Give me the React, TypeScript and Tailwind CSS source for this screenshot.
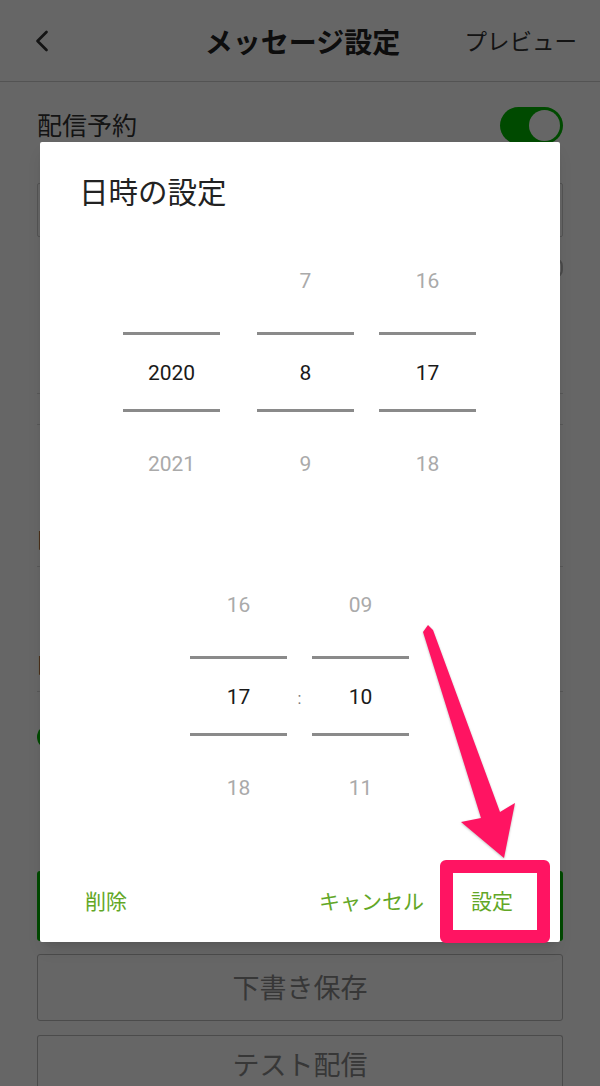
import { ChevronLeft } from "lucide-react";

const jp = { fontFamily: '"Noto Sans CJK JP", "Noto Sans", sans-serif' };
const num = { fontFamily: 'Roboto, "Noto Sans", sans-serif' };

interface WheelProps {
    prev: string;
    value: string;
    next: string;
}

function Wheel({ prev, value, next }: WheelProps) {
    return (
        <div className="flex flex-col items-center w-[97px]" style={num}>
            <div className="h-[40px] leading-[40px] text-[21px] text-[#aaaaaa]">{prev}</div>
            <div className="mt-[31px] w-full h-[80px] border-y-[3px] border-[#8a8a8a] flex items-center justify-center pt-[4px] text-[21px] text-[#1a1a1a]">
                {value}
            </div>
            <div className="mt-[32px] h-[40px] leading-[40px] text-[21px] text-[#aaaaaa]">{next}</div>
        </div>
    );
}

function BackgroundPage() {
    return (
        <div className="flex flex-col text-[#333]" style={jp}>
            {/* Header */}
            <div className="h-[82px] border-b border-[#cfcfcf] grid grid-cols-[1fr_auto_1fr] items-center pl-[24px] pr-[23px]">
                <ChevronLeft className="w-[36px] h-[36px] text-[#333]" strokeWidth={1.8} />
                <div className="text-[28px] font-bold text-[#222] translate-x-[2px]">メッセージ設定</div>
                <div className="justify-self-end text-[22.5px] text-[#333]">プレビュー</div>
            </div>

            {/* 配信予約 */}
            <div className="h-[86px] flex items-center justify-between px-[37px]">
                <span className="text-[25px]">配信予約</span>
                <div className="w-[63px] h-[37px] rounded-full bg-[#00b900] flex items-center justify-end pr-[3px]">
                    <div className="w-[31px] h-[31px] rounded-full bg-white" />
                </div>
            </div>

            <div className="mx-[37px] mt-[15px] h-[54px] border border-[#cfcfcf] rounded-[2px]" />

            <div className="mx-[37px] mt-[21px] h-[20px] flex justify-end">
                <div className="w-[16px] h-[20px] rounded-full border-2 border-[#bbb]" />
            </div>

            <div className="mx-[37px] mt-[115px] border-b border-[#ddd]" />
            <div className="mx-[37px] mt-[30px] border-b border-[#ddd]" />

            <div className="mx-[37px] mt-[95px] text-[24px] leading-[34px]">内容</div>
            <div className="mx-[37px] mt-[12px] border-b border-[#ddd]" />

            <div className="mx-[37px] mt-[78px] text-[24px] leading-[34px]">内容</div>
            <div className="mx-[37px] mt-[12px] border-b border-[#ddd]" />

            <div className="mx-[37px] mt-[30px] flex items-center gap-3">
                <div className="w-[24px] h-[24px] rounded-full bg-[#00b900]" />
                <span className="text-[20px]">すべての友だち</span>
            </div>

            <div className="mx-[37px] mt-[119px] h-[70px] bg-[#00b900] rounded-[3px]" />

            <div className="mx-[37px] mt-[13px] h-[67px] border border-[#bbb] rounded-[3px] bg-white flex items-center justify-center text-[27px] text-[#8a8a8a]">
                下書き保存
            </div>
            <div className="mx-[37px] mt-[14px] h-[56px] border-x border-t border-[#bbb] rounded-t-[3px] bg-white flex items-center justify-center text-[27px] leading-[40px] text-[#8a8a8a]">
                テスト配信
            </div>
        </div>
    );
}

export default function App() {
    return (
        <div className="relative w-[600px] h-[1086px] overflow-hidden bg-white">
            <BackgroundPage />

            {/* Dim overlay */}
            <div className="absolute inset-0 bg-black/60" />

            {/* Dialog */}
            <div
                className="absolute left-[40px] top-[142px] w-[520px] h-[800px] bg-white rounded-[2px] shadow-lg flex flex-col"
                style={jp}
            >
                <div className="pt-[28px] pl-[39px] text-[29.5px] leading-[40px] text-[#222]">日時の設定</div>

                {/* Date wheels */}
                <div className="mt-[51px] flex pl-[83px]">
                    <Wheel prev="" value="2020" next="2021" />
                    <div className="ml-[37px]">
                        <Wheel prev="7" value="8" next="9" />
                    </div>
                    <div className="ml-[25px]">
                        <Wheel prev="16" value="17" next="18" />
                    </div>
                </div>

                {/* Time wheels */}
                <div className="mt-[101px] flex pl-[150px] items-start">
                    <Wheel prev="16" value="17" next="18" />
                    <div className="w-[25px] h-[191px] pt-[102px] flex justify-center text-[16px] text-[#777]" style={num}>
                        :
                    </div>
                    <Wheel prev="09" value="10" next="11" />
                </div>

                {/* Actions */}
                <div className="mt-auto h-[82px] flex items-center pl-[45px] pr-[47px] text-[21px] text-[#62a726]">
                    <span>削除</span>
                    <span className="ml-auto">キャンセル</span>
                    <span className="ml-[47px]">設定</span>
                </div>
            </div>

            {/* Annotation: arrow */}
            <svg className="absolute inset-0 w-[600px] h-[1086px] pointer-events-none" viewBox="0 0 600 1086">
                <polygon
                    points="423,632 428,625 433,630 500,812 515,803 504,858 461,822 481,818"
                    fill="#ff1462"
                    style={{ filter: "drop-shadow(0px 1px 1px rgba(0,0,0,0.25))" }}
                />
            </svg>

            {/* Annotation: highlight box */}
            <div className="absolute left-[440px] top-[860px] w-[110px] h-[83px] border-[13px] border-[#ff1462] rounded-[6px]" />
        </div>
    );
}
